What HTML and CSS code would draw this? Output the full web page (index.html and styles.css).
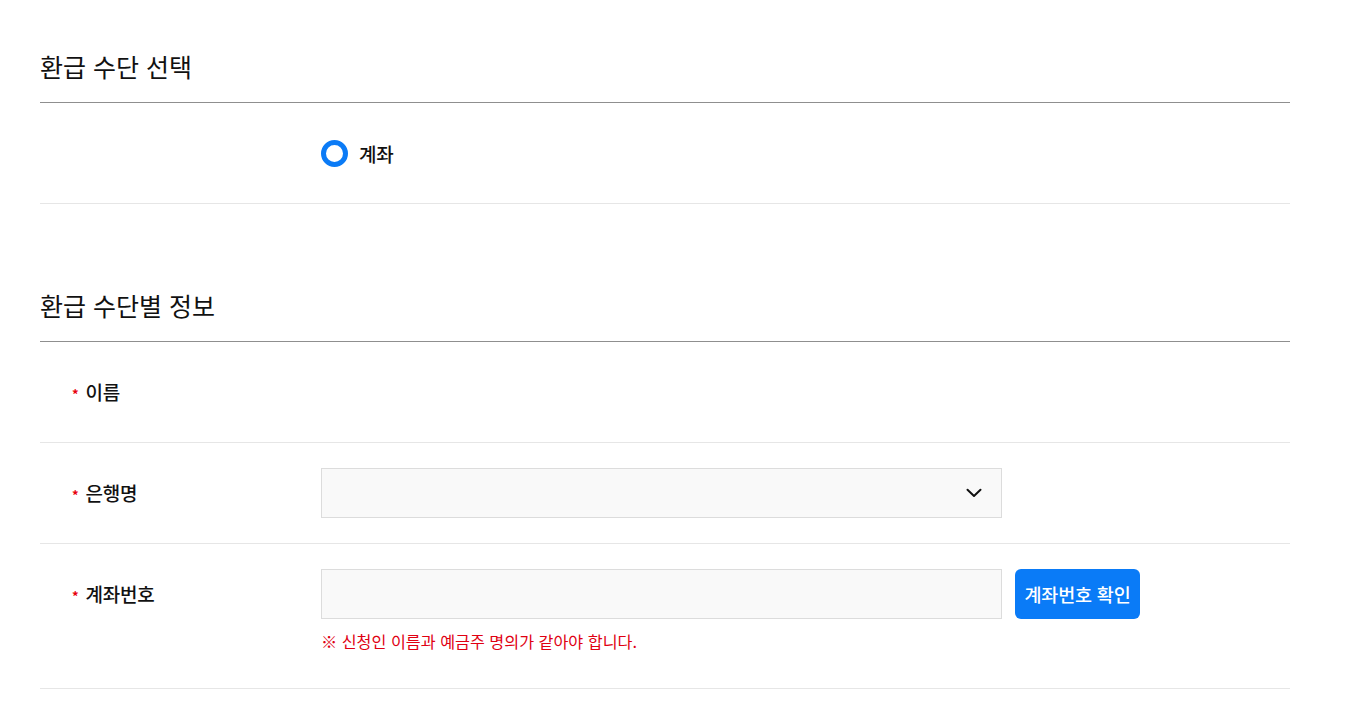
FILE: index.html
```html
<!DOCTYPE html>
<html lang="ko">
<head>
<meta charset="utf-8">
<title>환급 수단</title>
<link rel="stylesheet" href="styles.css">
</head>
<body>
<div class="page">
  <section class="section">
    <h2 class="section-title">환급 수단 선택</h2>
    <div class="row">
      <div class="row-label"></div>
      <div class="row-field">
        <label class="radio">
          <span class="radio-dot"></span>
          <span class="radio-text">계좌</span>
        </label>
      </div>
    </div>
  </section>

  <section class="section section-second">
    <h2 class="section-title">환급 수단별 정보</h2>
    <div class="row">
      <div class="row-label"><span class="req">*</span>이름</div>
      <div class="row-field"></div>
    </div>
    <div class="row">
      <div class="row-label"><span class="req">*</span>은행명</div>
      <div class="row-field">
        <div class="select">
          <svg class="chevron" width="16" height="10" viewBox="0 0 16 10"><path d="M1.5 1.8 L8 8 L14.5 1.8" fill="none" stroke="#111" stroke-width="2" stroke-linecap="round" stroke-linejoin="round"/></svg>
        </div>
      </div>
    </div>
    <div class="row row-last">
      <div class="row-label"><span class="req">*</span>계좌번호</div>
      <div class="row-field">
        <div class="input-line">
          <div class="input"></div>
          <button class="btn">계좌번호 확인</button>
        </div>
        <p class="notice">※ 신청인 이름과 예금주 명의가 같아야 합니다.</p>
      </div>
    </div>
  </section>
</div>
</body>
</html>
```

FILE: styles.css
```css
* { box-sizing: border-box; }
html, body { margin: 0; padding: 0; background: #fff; }
body {
  font-family: "Noto Sans CJK KR", "Noto Sans", sans-serif;
  color: #111;
}
.page {
  width: 1250px;
  margin-left: 40px;
  padding-top: 30px;
}
.section-title {
  margin: 0;
  padding: 18px 0;
  font-size: 25px;
  line-height: 36px;
  font-weight: 400;
  letter-spacing: 0;
  border-bottom: 1px solid #8f8f8f;
}
.section-second { margin-top: 65px; }
.row {
  display: flex;
  padding: 25px 0;
  border-bottom: 1px solid #e6e6e6;
  min-height: 100px;
}
.row-last { padding-bottom: 35px; }
.row-label {
  width: 281px;
  flex: none;
  height: 50px;
  display: flex;
  align-items: center;
  padding-left: 32px;
  font-size: 19px;
  font-weight: 500;
  letter-spacing: -0.2px;
  position: relative;
  top: -1px;
}
.req {
  color: #e8000b;
  font-size: 13px;
  font-weight: 700;
  margin-right: 7px;
  position: relative;
  top: 2px;
}
.row-field { flex: 1; }
.radio {
  display: flex;
  align-items: center;
  height: 50px;
}
.radio-dot {
  width: 27px;
  height: 27px;
  border-radius: 50%;
  border: 5px solid #0b7bf6;
  background: #fff;
  margin-right: 11px;
}
.radio-text { font-size: 19px; font-weight: 500; letter-spacing: -0.2px; }
.select {
  width: 681px;
  height: 50px;
  background: #f9f9f9;
  border: 1px solid #dcdcdc;
  display: flex;
  align-items: center;
  justify-content: flex-end;
  padding-right: 19px;
}
.input-line { display: flex; align-items: center; }
.input {
  width: 681px;
  height: 50px;
  background: #f9f9f9;
  border: 1px solid #dcdcdc;
}
.btn {
  margin-left: 13px;
  width: 125px;
  height: 50px;
  border: none;
  border-radius: 6px;
  background: #0a7bf7;
  color: #fff;
  font-family: inherit;
  font-size: 18.5px;
  font-weight: 500;
  letter-spacing: -0.2px;
  padding: 0;
}
.notice {
  margin: 10px 0 0;
  font-size: 16.2px;
  line-height: 24px;
  color: #e00012;
  font-weight: 400;
  letter-spacing: 0;
}
```
